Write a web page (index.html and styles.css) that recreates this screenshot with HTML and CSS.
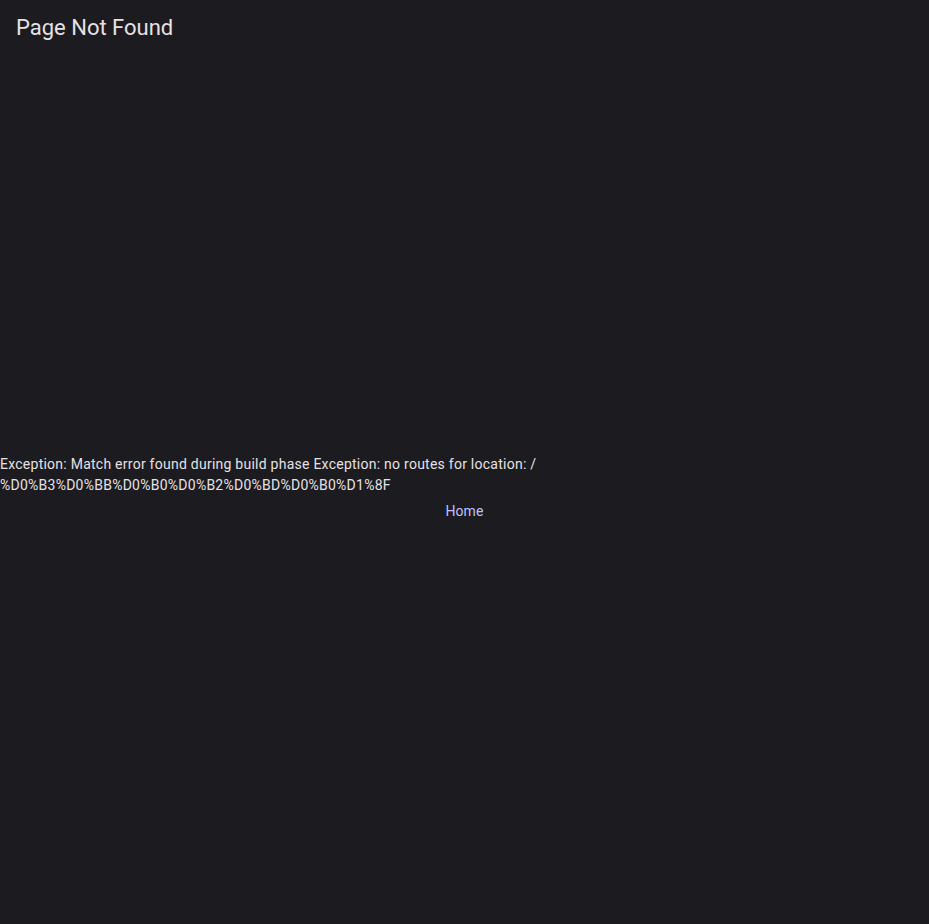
FILE: index.html
```html
<!DOCTYPE html>
<html lang="en">
<head>
<meta charset="utf-8">
<title>Page Not Found</title>
<link rel="stylesheet" href="styles.css">
</head>
<body>
<div class="app">
  <header class="appbar">
    <h1 class="title">Page Not Found</h1>
  </header>
  <main class="content">
    <p class="error">Exception: Match error found during build phase Exception: no routes for location: /<br>%D0%B3%D0%BB%D0%B0%D0%B2%D0%BD%D0%B0%D1%8F</p>
    <a class="home" href="#">Home</a>
  </main>
</div>
</body>
</html>
```
FILE: styles.css
```css
html, body {
  margin: 0;
  padding: 0;
  background: #1c1b1f;
  font-family: Roboto, "Liberation Sans", sans-serif;
  color: #e6e1e5;
}
.app {
  display: flex;
  flex-direction: column;
  height: 924px;
}
.appbar {
  height: 56px;
  display: flex;
  align-items: center;
  padding: 0 16px;
  flex: none;
}
.title {
  margin: 0;
  font-size: 22px;
  font-weight: 400;
  line-height: 28px;
  color: #e6e1e5;
}
.content {
  flex: 1;
  display: flex;
  flex-direction: column;
  justify-content: center;
  align-items: stretch;
}
.error {
  margin: 0;
  font-size: 14px;
  line-height: 21px;
  letter-spacing: 0.25px;
  color: #e6e1e5;
  text-align: left;
}
.home {
  align-self: center;
  display: flex;
  align-items: center;
  height: 30px;
  padding: 0 12px;
  font-size: 14px;
  font-weight: 400;
  letter-spacing: 0.1px;
  color: #bcc2ff;
  text-decoration: none;
}
```
